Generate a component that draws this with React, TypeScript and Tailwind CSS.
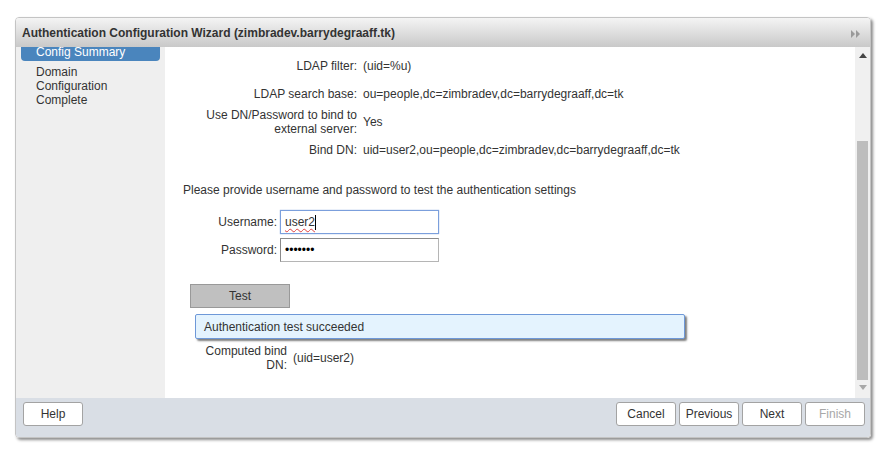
import React from 'react';

const rows: { label: React.ReactNode; value: string }[] = [
  { label: 'LDAP filter:', value: '(uid=%u)' },
  { label: 'LDAP search base:', value: 'ou=people,dc=zimbradev,dc=barrydegraaff,dc=tk' },
  {
    label: (
      <>
        Use DN/Password to bind to
        <br />
        external server:
      </>
    ),
    value: 'Yes',
  },
  { label: 'Bind DN:', value: 'uid=user2,ou=people,dc=zimbradev,dc=barrydegraaff,dc=tk' },
];

const FooterButton: React.FC<{ label: string; disabled?: boolean }> = ({ label, disabled }) => (
  <button
    className={`w-[60px] h-[24px] bg-white border border-[#a3a3a3] rounded-[3px] text-[12px] ${
      disabled ? 'text-[#a8a8a8]' : 'text-[#333]'
    }`}
  >
    {label}
  </button>
);

export default function App() {
  return (
    <div
      className="w-[891px] h-[470px] bg-white pt-[17px] pl-[15px] text-[12px] text-[#333]"
      style={{ fontFamily: '"Liberation Sans", Arial, sans-serif' }}
    >
      <div className="w-[856px] h-[421px] flex flex-col rounded-[4px] border border-[#c4c4c4] shadow-[2px_2px_3px_rgba(0,0,0,0.45)] overflow-hidden">
        {/* title bar */}
        <div className="h-[29px] shrink-0 flex items-center justify-between pl-[6px] pr-[9px] bg-gradient-to-b from-[#f4f4f4] to-[#c9c9c9]">
          <span className="font-bold text-[12px] text-[#333]">
            Authentication Configuration Wizard (zimbradev.barrydegraaff.tk)
          </span>
          <svg width="10" height="8" viewBox="0 0 10 8" className="mt-[3px]">
            <polygon points="0,0 4,4 0,8" fill="#9a9a9a" />
            <polygon points="5,0 9,4 5,8" fill="#9a9a9a" />
          </svg>
        </div>

        {/* body */}
        <div className="h-[351px] flex">
          <div className="w-[149px] shrink-0 bg-[#efefef] px-[5px]">
            <div className="h-[14px] bg-[#4a85bd] rounded-b-[4px] pl-[15px] text-white leading-[11px]">
              Config Summary
            </div>
            <div className="pl-[15px] pt-[4px] leading-[14px]">
              Domain
              <br />
              Configuration
              <br />
              Complete
            </div>
          </div>

          <div className="flex-1 bg-white pt-[5px]">
            {rows.map((r, i) => (
              <div key={i} className="h-[28px] flex items-center leading-[14px]">
                <div className="w-[192px] text-right">{r.label}</div>
                <div className="pl-[6px]">{r.value}</div>
              </div>
            ))}

            <div className="mt-[19px] pl-[18px] leading-[14px]">
              Please provide username and password to test the authentication settings
            </div>

            <div className="mt-[13px] pl-[18px] flex flex-col gap-[4px]">
              <div className="flex items-center">
                <div className="w-[94px] text-right">Username:</div>
                <div className="ml-[3px] w-[159px] h-[24px] border border-[#7b9fdc] shadow-[0_0_1px_#7b9fdc] flex items-center px-[4px]">
                  <span className="underline decoration-wavy decoration-[#e04040] decoration-1 underline-offset-2">
                    user2
                  </span>
                  <span className="w-px h-[15px] bg-black" />
                </div>
              </div>
              <div className="flex items-center">
                <div className="w-[94px] text-right">Password:</div>
                <div className="ml-[3px] w-[159px] h-[24px] border border-[#8a8a8a] border-b-[#b5b5b5] border-r-[#b5b5b5] flex items-center px-[4px] text-[12px] text-black">
                  •••••••
                </div>
              </div>
            </div>

            <button className="mt-[22px] ml-[25px] w-[100px] h-[24px] bg-[#c0c0c0] border border-[#999] text-[12px] text-[#333]">
              Test
            </button>

            <div className="mt-[6px] ml-[30px] w-[490px] h-[25px] bg-[#e4f3fe] border border-[#6e98d8] rounded-[2px] shadow-[2px_2px_2px_rgba(0,0,0,0.5)] flex items-center pl-[8px]">
              Authentication test succeeded
            </div>

            <div className="mt-[5px] ml-[30px] flex items-center leading-[14px]">
              <div className="w-[92px] text-right">
                Computed bind
                <br />
                DN:
              </div>
              <div className="pl-[6px]">(uid=user2)</div>
            </div>
          </div>

          {/* scrollbar */}
          <div className="w-[15px] shrink-0 bg-[#f0f0f0] flex flex-col items-center">
            <svg width="8" height="5" viewBox="0 0 8 5" className="mt-[6px]">
              <polygon points="0,5 4,0 8,5" fill="#444" />
            </svg>
            <div className="mt-[83px] w-[11px] h-[239px] bg-[#bdbdbd]" />
            <svg width="8" height="5" viewBox="0 0 8 5" className="mt-[5px]">
              <polygon points="0,0 8,0 4,5" fill="#a8a8a8" />
            </svg>
          </div>
        </div>

        {/* footer */}
        <div className="flex-1 bg-[#d9dee5] flex items-start justify-between pt-[4px] pl-[7px] pr-[5px]">
          <FooterButton label="Help" />
          <div className="flex gap-[3px]">
            <FooterButton label="Cancel" />
            <FooterButton label="Previous" />
            <FooterButton label="Next" />
            <FooterButton label="Finish" disabled />
          </div>
        </div>
      </div>
    </div>
  );
}
